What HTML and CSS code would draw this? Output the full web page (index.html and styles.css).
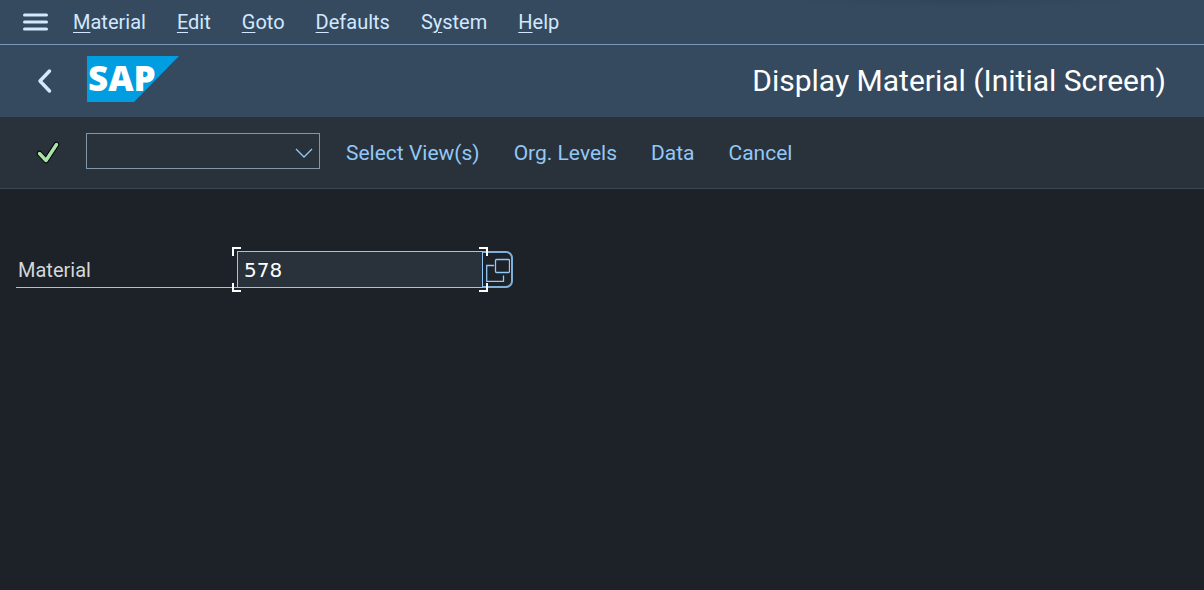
FILE: index.html
```
<!DOCTYPE html>
<html lang="en">
<head>
<meta charset="utf-8">
<meta name="viewport" content="width=device-width, initial-scale=1">
<title>Display Material (Initial Screen)</title>
<link rel="stylesheet" href="styles.css">
</head>
<body>
<nav class="menubar" aria-label="Main menu">
  <button class="icon-button menu-toggle" type="button" aria-label="Menu">
    <svg width="26" height="18" viewBox="0 0 26 18"><path d="M1.5 2H23.5M1.5 9H23.5M1.5 16H23.5" stroke="#d1e8ff" stroke-width="3" stroke-linecap="round"/></svg>
  </button>
  <button class="menu-item" type="button"><u>M</u>aterial</button>
  <button class="menu-item" type="button"><u>E</u>dit</button>
  <button class="menu-item" type="button"><u>G</u>oto</button>
  <button class="menu-item" type="button"><u>D</u>efaults</button>
  <button class="menu-item" type="button">S<u>y</u>stem</button>
  <button class="menu-item" type="button"><u>H</u>elp</button>
</nav>
<header class="header">
  <button class="icon-button back" type="button" aria-label="Back">
    <svg width="16" height="26" viewBox="0 0 16 26" fill="none"><path d="M13.500 3L4 13L13.500 23" stroke="#d1e8ff" stroke-width="3.500" stroke-linecap="round" stroke-linejoin="round"/></svg>
  </button>
  <svg class="logo" width="92" height="46" viewBox="0 0 92 46" role="img" aria-label="SAP">
    <path d="M0 0H92L47 46H0Z" fill="#009de0"/>
    <text class="logo-text" x="1" y="35">SAP</text>
  </svg>
  <h1 class="title">Display Material (Initial Screen)</h1>
</header>
<div class="toolbar" role="toolbar" aria-label="Application toolbar">
  <button class="icon-button confirm" type="button" aria-label="Enter">
    <svg width="24" height="24" viewBox="0 0 24 24" fill="none" stroke-linecap="round" stroke-linejoin="round"><path d="M3.500 12.500L10 19.500L20.500 3.500" stroke="#000" stroke-width="5.500"/><path d="M3.500 12.500L10 19.500L20.500 3.500" stroke="#abe2ab" stroke-width="3.500"/></svg>
  </button>
  <div class="command">
    <select class="command-select" aria-label="Command"><option></option></select>
    <svg class="command-arrow" width="18" height="11" viewBox="0 0 18 11" fill="none"><path d="M1 1L9 9L17 1" stroke="#91c8f6" stroke-width="1.300"/></svg>
  </div>
  <button class="action" type="button">Select View(s)</button>
  <button class="action" type="button">Org. Levels</button>
  <button class="action" type="button">Data</button>
  <button class="action" type="button">Cancel</button>
</div>
<main class="content">
  <form class="field">
    <label class="field-label" for="material">Material</label>
    <div class="field-control">
      <input class="field-input" id="material" type="text" value="578">
      <span class="corner top left"></span>
      <span class="corner top right"></span>
      <span class="corner bottom left"></span>
      <span class="corner bottom right"></span>
    </div>
    <button class="value-help" type="button" aria-label="Value help">
      <svg width="24" height="24" viewBox="0 0 24 24" fill="none" stroke="#91c8f6" stroke-width="1.300"><rect x="9.500" y="1.500" width="14" height="13" rx="1"/><path d="M8 7.500H0.700V23.300H17.500V17.500"/></svg>
    </button>
  </form>
</main>
</body>
</html>
```
FILE: styles.css
```
* {
  box-sizing: border-box;
}

body {
  margin: 0;
  min-height: 100vh;
  background: #1d2128;
  color: #d3d7d9;
  font-family: Roboto, "Liberation Sans", sans-serif;
  font-size: 20px;
  line-height: 24px;
}

button,
input,
select {
  margin: 0;
  padding: 0;
  border: 0;
  border-radius: 0;
  background: none;
  color: inherit;
  font: inherit;
}

svg {
  display: block;
}

.icon-button {
  flex: none;
}

.menubar {
  display: flex;
  align-items: center;
  gap: 31px;
  height: 45px;
  padding-left: 23px;
  border-bottom: 1px solid #7996b8;
  background: radial-gradient(180px 8px at 80% 0, #30445a, #354a5f);
  color: #d1e8ff;
}

.menu-toggle {
  margin-right: -7px;
}

.menu-item u {
  text-decoration-thickness: 1px;
  text-underline-offset: 3px;
}

.header {
  display: flex;
  align-items: center;
  height: 72px;
  padding: 0 38px 0 36px;
  background: #354a5f;
}

.logo {
  flex: none;
  margin: 0 0 4px 35px;
  overflow: visible;
}

.logo-text {
  fill: #fff;
  font-family: "Open Sans", sans-serif;
  font-size: 35px;
  font-weight: 800;
}

.title {
  margin: 0 0 0 auto;
  color: #fff;
  font-size: 30px;
  font-weight: 400;
  line-height: 36px;
}

.toolbar {
  display: flex;
  align-items: center;
  gap: 34px;
  height: 72px;
  padding-left: 36px;
  border-bottom: 1px solid #3a4552;
  background: #29313a;
  color: #91c8f6;
  font-size: 21px;
}

.command {
  position: relative;
  flex: none;
  width: 234px;
  margin: 0 -8px 4px -8px;
}

.command-select {
  display: block;
  width: 100%;
  height: 36px;
  padding: 0 32px 0 8px;
  border: 1px solid #8396a8;
  appearance: none;
}

.command-arrow {
  position: absolute;
  top: 15px;
  right: 7px;
  pointer-events: none;
}

.content {
  padding: 62px 16px;
}

.field {
  display: flex;
}

.field-label {
  width: 221px;
  padding: 7px 2px 5px;
  border-bottom: 1px solid #b8bec1;
}

.field-control {
  position: relative;
}

.field-input {
  display: block;
  width: 246px;
  height: 37px;
  padding: 0 6px;
  border: 1px solid #91c8f6;
  background: #29313a;
  color: #fff;
  font-family: "DejaVu Sans", sans-serif;
  outline: 0;
}

.corner {
  position: absolute;
  width: 9px;
  height: 9px;
  border: 0 solid #fff;
}

.top {
  top: -4px;
  border-top-width: 2px;
}

.bottom {
  bottom: -4px;
  border-bottom-width: 2px;
}

.left {
  left: -5px;
  border-left-width: 2px;
}

.right {
  right: -5px;
  border-right-width: 2px;
}

.value-help {
  display: flex;
  align-items: center;
  width: 30px;
  padding-left: 3px;
  border: 2px solid #7fb0da;
  border-left: 0;
  border-radius: 0 7px 7px 0;
}
```
